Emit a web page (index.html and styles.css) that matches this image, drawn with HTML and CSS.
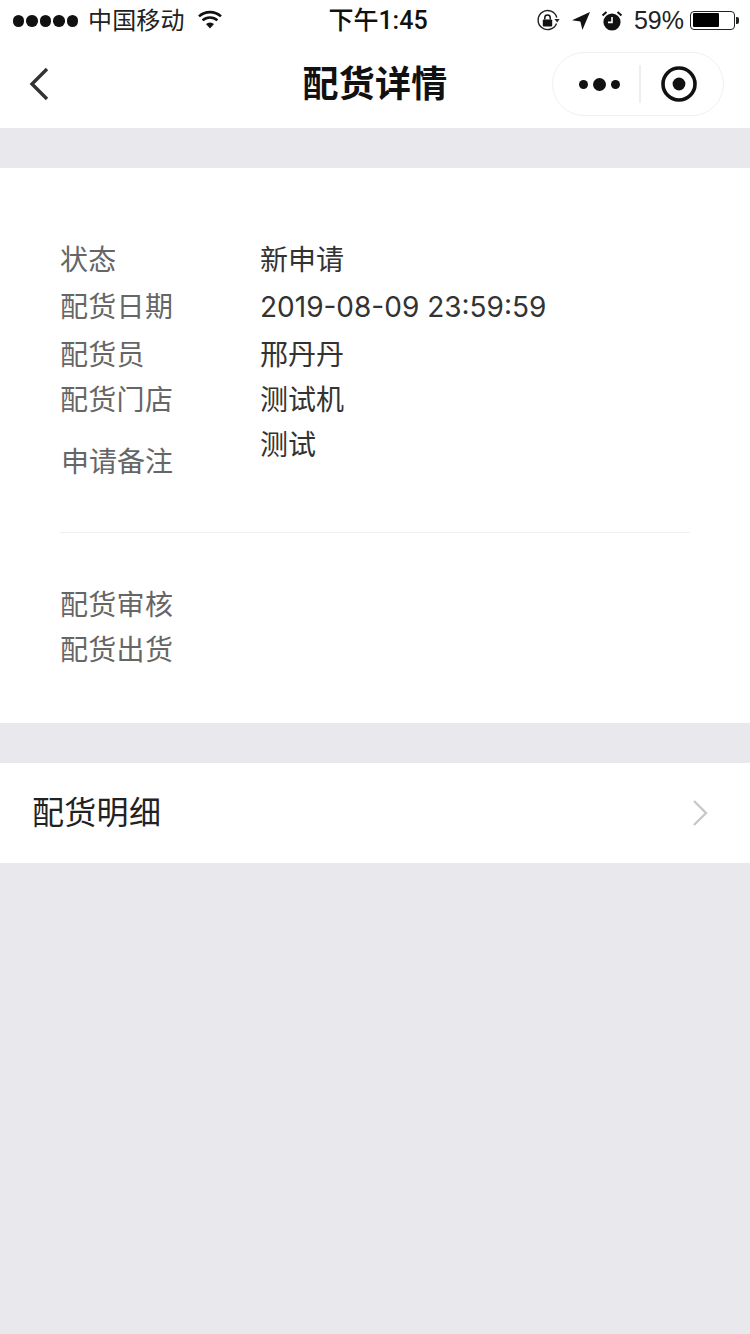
FILE: index.html
```html
<!DOCTYPE html>
<html lang="zh">
<head>
<meta charset="utf-8">
<title>配货详情</title>
<link rel="stylesheet" href="styles.css">
</head>
<body>
<div class="page">
  <header class="top">
    <div class="status">
      <div class="status-left">
        <span class="dots"><i></i><i></i><i></i><i></i><i></i></span>
        <span class="carrier">中国移动</span>
        <svg class="wifi" width="26" height="20" viewBox="0 0 26 20"><path d="M13 18.5 9 14a6 6 0 0 1 8 0Z" fill="#111"/><path d="M5.6 10.4a11 11 0 0 1 14.8 0M2 6.4a16.4 16.4 0 0 1 22 0" fill="none" stroke="#111" stroke-width="2.6"/></svg>
      </div>
      <div class="clock">下午1:45</div>
      <div class="status-right">
        <svg class="lock" width="24" height="24" viewBox="0 0 24 24"><path d="M20.5 14.5A9.5 9.5 0 1 1 20.8 8.6" fill="none" stroke="#222" stroke-width="1.4"/><path d="M18.4 10h5.2l-2.4 3.4Z" fill="#222"/><rect x="6.8" y="10.5" width="9.4" height="7" rx="1" fill="#111"/><path d="M8.8 10.5V8.6a2.7 2.7 0 0 1 5.4 0v1.9" fill="none" stroke="#111" stroke-width="1.5"/></svg>
        <svg class="loc" width="20" height="20" viewBox="0 0 20 20"><path d="M19 1 1 9.2l8.4 1.4L11.4 19Z" fill="#111"/></svg>
        <svg class="alarm" width="22" height="22" viewBox="0 0 22 22"><circle cx="11" cy="12" r="8.6" fill="#111"/><path d="M11 7v5.4H7" fill="none" stroke="#fff" stroke-width="1.6"/><path d="M1.5 5.5 5.5 2M20.5 5.5 16.5 2" stroke="#111" stroke-width="2"/></svg>
        <span class="pct">59%</span>
        <span class="battery"><span class="battery-fill"></span></span>
        <span class="nub"></span>
      </div>
    </div>
    <nav class="nav">
      <svg class="back" width="22" height="34" viewBox="0 0 22 34"><path d="M19 2 4 17l15 15" fill="none" stroke="#333" stroke-width="3.4"/></svg>
      <h1 class="title">配货详情</h1>
      <div class="capsule">
        <span class="more"><i></i><b></b><i></i></span>
        <span class="sep"></span>
        <svg class="target" width="38" height="38" viewBox="0 0 38 38"><circle cx="19" cy="19" r="16" fill="none" stroke="#111" stroke-width="3.6"/><circle cx="19" cy="19" r="6.4" fill="#111"/></svg>
      </div>
    </nav>
  </header>

  <section class="card">
    <div class="row"><span class="label">状态</span><span class="value">新申请</span></div>
    <div class="row gap-s"><span class="label">配货日期</span><span class="value">2019-08-09 23:59:59</span></div>
    <div class="row gap-m"><span class="label">配货员</span><span class="value">邢丹丹</span></div>
    <div class="row"><span class="label">配货门店</span><span class="value">测试机</span></div>
    <div class="row note"><span class="label">申请备注</span><span class="value">测试</span></div>
    <hr class="rule">
    <div class="row"><span class="label">配货审核</span></div>
    <div class="row"><span class="label">配货出货</span></div>
  </section>

  <a class="link">
    <span class="link-text">配货明细</span>
    <svg width="18" height="28" viewBox="0 0 18 28"><path d="M3 2l12 12L3 26" fill="none" stroke="#c8c8cc" stroke-width="2.4"/></svg>
  </a>
</div>
</body>
</html>
```
FILE: styles.css
```css
* { box-sizing: border-box; }
html, body { margin: 0; padding: 0; }
body { background: #e8e8ed; font-family: "Liberation Sans", "Noto Sans CJK SC", sans-serif; }
.page { width: 750px; height: 1334px; overflow: hidden; }

.top { background: #fff; height: 128px; }
.status { height: 42px; display: flex; align-items: center; justify-content: space-between; padding: 0 11px 0 13px; position: relative; color: #111; }
.status-left, .status-right { display: flex; align-items: center; }
.dots { display: flex; gap: 2px; }
.dots i { width: 11.4px; height: 11.4px; border-radius: 50%; background: #111; }
.carrier { font-size: 24px; line-height: 30px; margin: 0 0 1px 10px; color: #222; letter-spacing: 0.2px; }
.wifi { margin: 0 0 2px 12px; }
.clock { position: absolute; left: 0; right: 0; top: 6px; text-align: center; font-family: "Roboto", "Noto Sans CJK SC", sans-serif; font-size: 25px; line-height: 30px; font-weight: 500; color: #111; padding-left: 6px; }
.lock { margin-right: 11px; }
.loc { margin-right: 10px; }
.alarm { margin-right: 11px; }
.pct { font-size: 25px; line-height: 30px; color: #222; margin: 0 6px 2px 0; }
.battery { width: 45px; height: 19px; border: 1.6px solid #222; border-radius: 4px; padding: 1.5px; display: block; margin-bottom: 2px; }
.battery-fill { display: block; width: 26px; height: 100%; background: #000; border-radius: 1px; }
.nub { width: 3px; height: 7px; background: #222; margin: 0 0 2px 1px; border-radius: 0 2px 2px 0; }

.nav { height: 86px; display: flex; align-items: center; justify-content: center; position: relative; }
.back { position: absolute; left: 28px; top: 25px; }
.title { margin: 0; font-size: 36px; font-weight: 700; color: #111; line-height: 1; letter-spacing: 0.3px; }
.capsule { position: absolute; left: 552px; top: 10px; width: 172px; height: 64px; border: 1.5px solid #f0f0f0; border-radius: 32px; display: flex; align-items: center; }
.more { width: 86px; padding-left: 6px; display: flex; align-items: center; justify-content: center; gap: 5px; }
.more i { width: 9px; height: 9px; border-radius: 50%; background: #111; }
.more b { width: 13px; height: 13px; border-radius: 50%; background: #111; }
.sep { width: 2px; height: 38px; background: #eeeeee; }
.target { margin-left: 19px; }

.card { background: #fff; margin-top: 40px; height: 555px; padding: 70px 60px 0; }
.row { display: flex; height: 45px; align-items: center; font-size: 28px; line-height: 45px; }
.gap-s { margin-top: 2px; }
.gap-m { margin-top: 3px; }
.label { width: 200px; color: #666; letter-spacing: 0.3px; }
.value { font-family: "Inter", "Noto Sans CJK SC", sans-serif; color: #333; }
.row.note { height: 62px; align-items: flex-start; }
.note .label { padding: 17px 0 0 1px; letter-spacing: 0; }
.rule { border: 0; height: 1px; background: #f0f0f0; margin: 47px 0 50px; width: 630px; }

.link { background: #fff; margin-top: 40px; height: 100px; display: flex; align-items: center; justify-content: space-between; padding: 0 41px 0 32px; font-size: 32px; color: #222; }
.link-text { padding-bottom: 6px; letter-spacing: 0.3px; }
```
